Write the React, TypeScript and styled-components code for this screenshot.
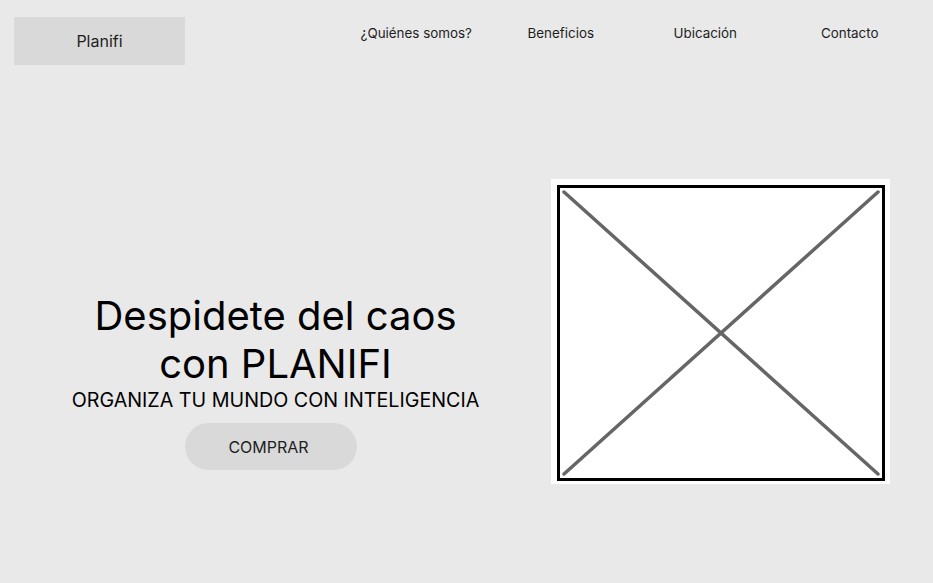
import React from 'react';
import styled, { createGlobalStyle } from 'styled-components';

const GlobalStyle = createGlobalStyle`
    html, body {
        margin: 0;
        padding: 0;
        background: #e9e9e9;
    }
    body {
        font-family: Inter, "Noto Sans", "Liberation Sans", sans-serif;
        color: #000;
    }
`

const Page = styled.div`
    width: 933px;
    height: 583px;
    background: #e9e9e9;
    display: flex;
    flex-direction: column;
    overflow: hidden;
`

const Header = styled.header`
    display: flex;
    align-items: flex-start;
    padding: 17px 11px 0 14px;
`

const Logo = styled.div`
    width: 171px;
    height: 48px;
    background: #d9d9d9;
    display: flex;
    align-items: center;
    justify-content: center;
    font-size: 16px;
    color: #1e1e1e;
`

const Nav = styled.nav`
    margin-left: auto;
    display: grid;
    grid-template-columns: repeat(4, 144.5px);
    padding-top: 8px;
`

const NavLink = styled.a`
    text-align: center;
    font-size: 13.4px;
    line-height: 17px;
    color: #1e1e1e;
    text-decoration: none;
    cursor: pointer;
`

const Hero = styled.section`
    display: flex;
    align-items: stretch;
    padding-top: 114px;
`

const TextColumn = styled.div`
    width: 551px;
    display: flex;
    flex-direction: column;
    align-items: center;
    justify-content: flex-end;
    padding-bottom: 14px;
`

const Title = styled.h1`
    margin: 0;
    font-size: 40px;
    font-weight: 400;
    line-height: 48px;
    text-align: center;
`

const Subtitle = styled.p`
    margin: 0;
    font-size: 19.7px;
    line-height: 24px;
    text-align: center;
`

const BuyButton = styled.button`
    margin-top: 11px;
    margin-right: 10px;
    width: 172px;
    height: 47px;
    border: none;
    border-radius: 24px;
    background: #d9d9d9;
    font-family: inherit;
    font-size: 16px;
    color: #1e1e1e;
    cursor: pointer;
    padding: 0 4px 0 0;
`

const ImageFrame = styled.div`
    width: 339px;
    height: 305px;
    background: #fff;
    padding: 6px 5px 3px 6px;
    box-sizing: border-box;
`

const ImageBox = styled.div`
    width: 100%;
    height: 100%;
    border: 3px solid #000;
    box-sizing: border-box;
    svg {
        display: block;
        width: 100%;
        height: 100%;
    }
`

function Placeholder() {
    return (
        <ImageFrame>
            <ImageBox>
                <svg viewBox="0 0 322 290" preserveAspectRatio="none">
                    <line x1="4" y1="4" x2="318" y2="286" stroke="#666" strokeWidth="3.5" strokeLinecap="round" />
                    <line x1="318" y1="4" x2="4" y2="286" stroke="#666" strokeWidth="3.5" strokeLinecap="round" />
                </svg>
            </ImageBox>
        </ImageFrame>
    );
}

const links = ['¿Quiénes somos?', 'Beneficios', 'Ubicación', 'Contacto'];

function App() {
    return (
        <Page>
            <GlobalStyle />
            <Header>
                <Logo>Planifi</Logo>
                <Nav>
                    {links.map(l => <NavLink key={l}>{l}</NavLink>)}
                </Nav>
            </Header>
            <Hero>
                <TextColumn>
                    <Title>Despidete del caos<br />con PLANIFI</Title>
                    <Subtitle>ORGANIZA TU MUNDO CON INTELIGENCIA</Subtitle>
                    <BuyButton>COMPRAR</BuyButton>
                </TextColumn>
                <Placeholder />
            </Hero>
        </Page>
    );
}

export default App;
